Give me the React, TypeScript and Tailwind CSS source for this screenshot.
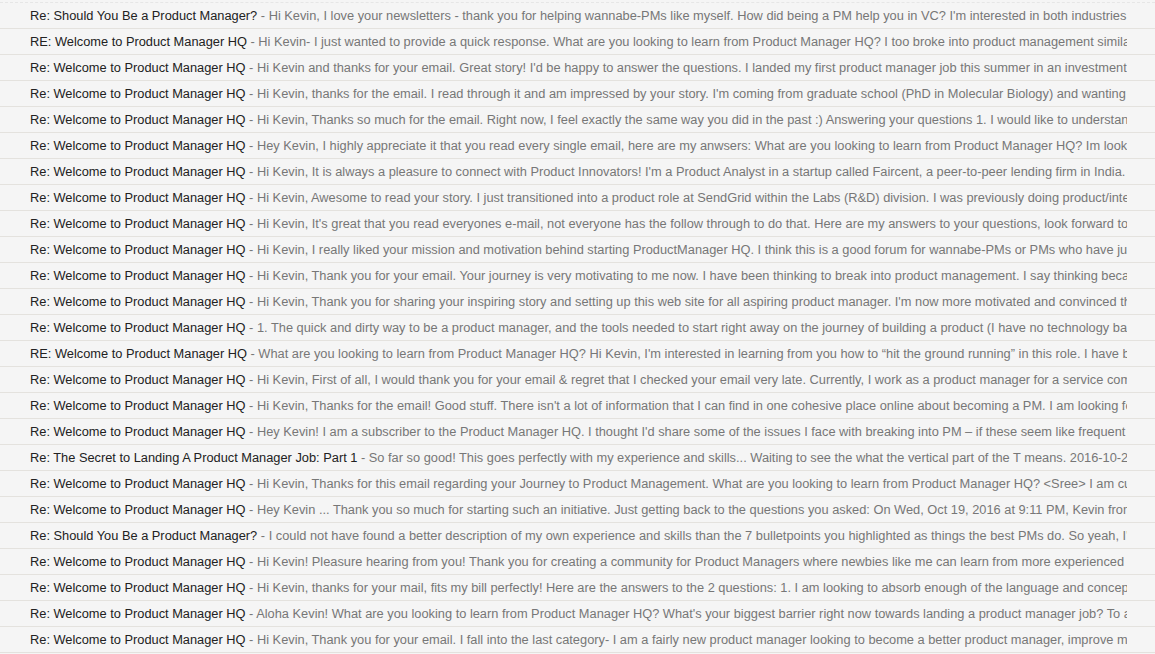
const rows: [string, string][] = [
  ["Re: Should You Be a Product Manager?", "Hi Kevin, I love your newsletters - thank you for helping wannabe-PMs like myself. How did being a PM help you in VC? I'm interested in both industries and would love to know more"],
  ["RE: Welcome to Product Manager HQ", "Hi Kevin- I just wanted to provide a quick response. What are you looking to learn from Product Manager HQ? I too broke into product management similarly to you"],
  ["Re: Welcome to Product Manager HQ", "Hi Kevin and thanks for your email. Great story! I'd be happy to answer the questions. I landed my first product manager job this summer in an investment bank"],
  ["Re: Welcome to Product Manager HQ", "Hi Kevin, thanks for the email. I read through it and am impressed by your story. I'm coming from graduate school (PhD in Molecular Biology) and wanting to move"],
  ["Re: Welcome to Product Manager HQ", "Hi Kevin, Thanks so much for the email. Right now, I feel exactly the same way you did in the past :) Answering your questions 1. I would like to understand"],
  ["Re: Welcome to Product Manager HQ", "Hey Kevin, I highly appreciate it that you read every single email, here are my anwsers: What are you looking to learn from Product Manager HQ? Im looking for"],
  ["Re: Welcome to Product Manager HQ", "Hi Kevin, It is always a pleasure to connect with Product Innovators! I'm a Product Analyst in a startup called Faircent, a peer-to-peer lending firm in India. We"],
  ["Re: Welcome to Product Manager HQ", "Hi Kevin, Awesome to read your story. I just transitioned into a product role at SendGrid within the Labs (R&D) division. I was previously doing product/integrations"],
  ["Re: Welcome to Product Manager HQ", "Hi Kevin, It's great that you read everyones e-mail, not everyone has the follow through to do that. Here are my answers to your questions, look forward to hearing"],
  ["Re: Welcome to Product Manager HQ", "Hi Kevin, I really liked your mission and motivation behind starting ProductManager HQ. I think this is a good forum for wannabe-PMs or PMs who have just started"],
  ["Re: Welcome to Product Manager HQ", "Hi Kevin, Thank you for your email. Your journey is very motivating to me now. I have been thinking to break into product management. I say thinking because"],
  ["Re: Welcome to Product Manager HQ", "Hi Kevin, Thank you for sharing your inspiring story and setting up this web site for all aspiring product manager. I'm now more motivated and convinced that"],
  ["Re: Welcome to Product Manager HQ", "1. The quick and dirty way to be a product manager, and the tools needed to start right away on the journey of building a product (I have no technology background"],
  ["RE: Welcome to Product Manager HQ", "What are you looking to learn from Product Manager HQ? Hi Kevin, I'm interested in learning from you how to \u201chit the ground running\u201d in this role. I have been"],
  ["Re: Welcome to Product Manager HQ", "Hi Kevin, First of all, I would thank you for your email & regret that I checked your email very late. Currently, I work as a product manager for a service company"],
  ["Re: Welcome to Product Manager HQ", "Hi Kevin, Thanks for the email! Good stuff. There isn't a lot of information that I can find in one cohesive place online about becoming a PM. I am looking for"],
  ["Re: Welcome to Product Manager HQ", "Hey Kevin! I am a subscriber to the Product Manager HQ. I thought I'd share some of the issues I face with breaking into PM \u2013 if these seem like frequent ones"],
  ["Re: The Secret to Landing A Product Manager Job: Part 1", "So far so good! This goes perfectly with my experience and skills... Waiting to see the what the vertical part of the T means. 2016-10-20 12:00 GMT"],
  ["Re: Welcome to Product Manager HQ", "Hi Kevin, Thanks for this email regarding your Journey to Product Management. What are you looking to learn from Product Manager HQ? <Sree> I am curious to"],
  ["Re: Welcome to Product Manager HQ", "Hey Kevin ... Thank you so much for starting such an initiative. Just getting back to the questions you asked: On Wed, Oct 19, 2016 at 9:11 PM, Kevin from"],
  ["Re: Should You Be a Product Manager?", "I could not have found a better description of my own experience and skills than the 7 bulletpoints you highlighted as things the best PMs do. So yeah, I'm"],
  ["Re: Welcome to Product Manager HQ", "Hi Kevin! Pleasure hearing from you! Thank you for creating a community for Product Managers where newbies like me can learn from more experienced ones"],
  ["Re: Welcome to Product Manager HQ", "Hi Kevin, thanks for your mail, fits my bill perfectly! Here are the answers to the 2 questions: 1. I am looking to absorb enough of the language and concepts"],
  ["Re: Welcome to Product Manager HQ", "Aloha Kevin! What are you looking to learn from Product Manager HQ? What's your biggest barrier right now towards landing a product manager job? To answer"],
  ["Re: Welcome to Product Manager HQ", "Hi Kevin, Thank you for your email. I fall into the last category- I am a fairly new product manager looking to become a better product manager, improve my"],
];

export default function App() {
  return (
    <div className="h-[654px] w-[1155px] overflow-hidden bg-[#f5f5f5] pt-[2px] font-['Liberation_Sans',Arial,sans-serif] text-[12.82px]">
      <div className="border-t border-dashed border-[#e6e6e6]">
        {rows.map(([subject, snippet], i) => (
          <div
            key={i}
            className="flex h-[26px] items-center border-b border-[#e4e2de] pl-[30px] pr-[28px]"
          >
            <div className="overflow-hidden whitespace-nowrap">
              <span className="text-[#222222]">{subject}</span>
              <span className="text-[#777777]"> - {snippet}</span>
            </div>
          </div>
        ))}
      </div>
    </div>
  );
}
